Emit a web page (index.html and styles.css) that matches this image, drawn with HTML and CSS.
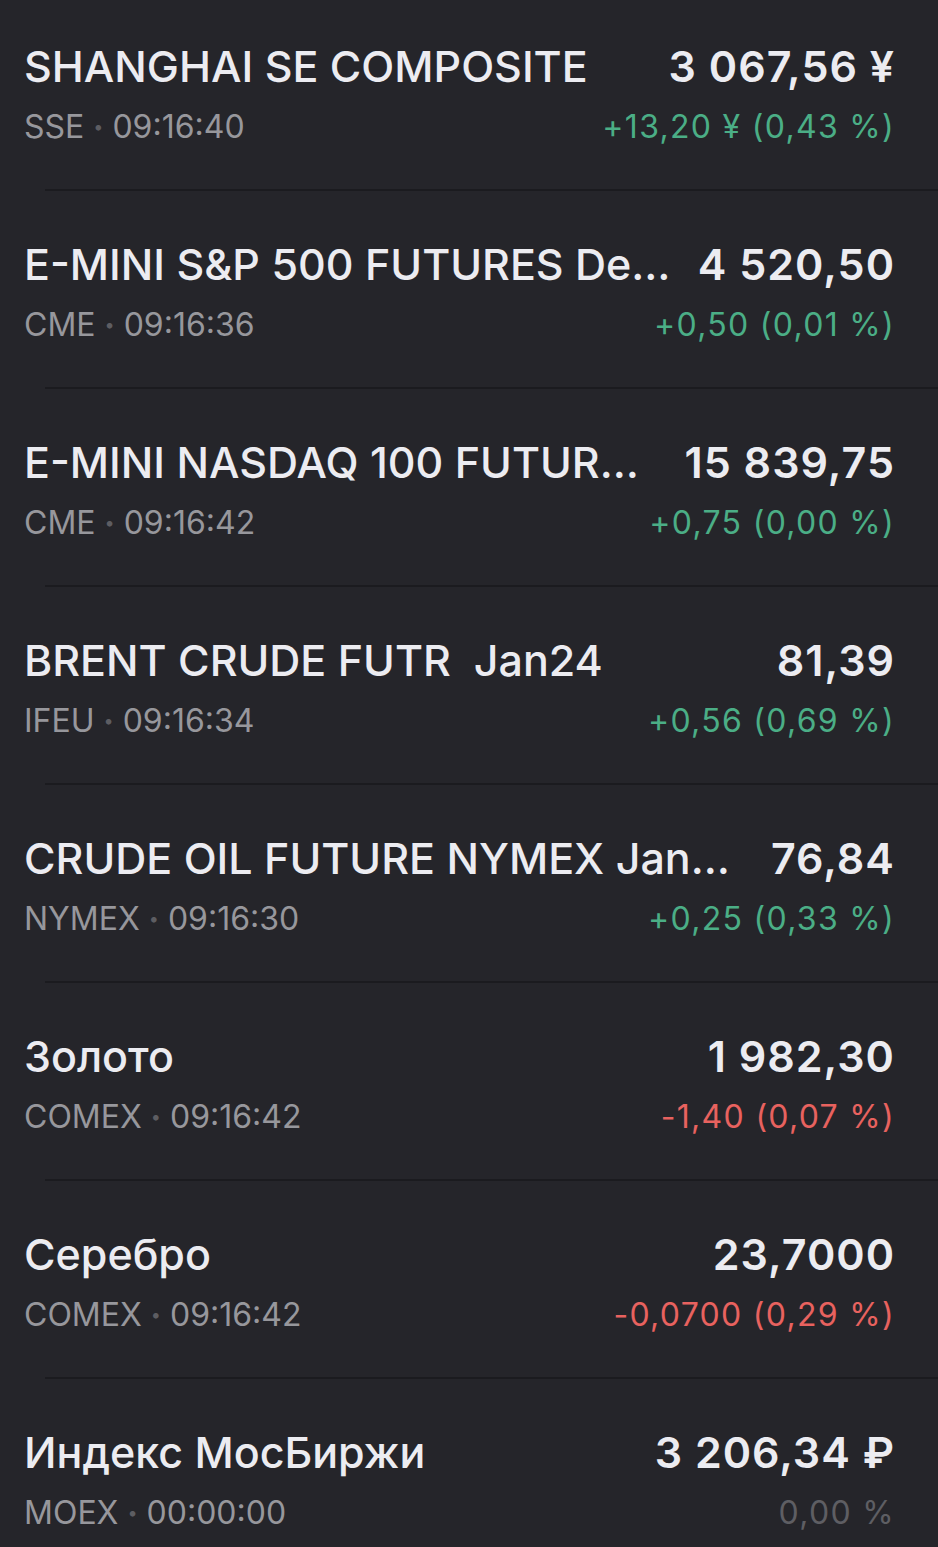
FILE: index.html
```html
<!DOCTYPE html>
<html lang="ru">
<head>
    <meta charset="UTF-8">
    <meta name="viewport" content="width=device-width, initial-scale=1.0">
    <title>Котировки</title>

    <link rel="stylesheet" href="styles.css">
</head>
<body>
    <ul class="quotes">
        <li class="quote">
            <div class="quote-main">
                <span class="quote-name">SHANGHAI SE COMPOSITE</span>
                <span class="quote-price">3&nbsp;067,56&nbsp;¥</span>
            </div>
            <div class="quote-sub">
                <span class="quote-meta">SSE <i class="dot">•</i> 09:16:40</span>
                <span class="quote-change up">+13,20&nbsp;¥ (0,43 %)</span>
            </div>
        </li>
        <li class="quote">
            <div class="quote-main">
                <span class="quote-name">E-MINI S&amp;P 500 FUTURES De…</span>
                <span class="quote-price">4&nbsp;520,50</span>
            </div>
            <div class="quote-sub">
                <span class="quote-meta">CME <i class="dot">•</i> 09:16:36</span>
                <span class="quote-change up">+0,50 (0,01 %)</span>
            </div>
        </li>
        <li class="quote">
            <div class="quote-main">
                <span class="quote-name">E-MINI NASDAQ 100 FUTUR…</span>
                <span class="quote-price">15&nbsp;839,75</span>
            </div>
            <div class="quote-sub">
                <span class="quote-meta">CME <i class="dot">•</i> 09:16:42</span>
                <span class="quote-change up">+0,75 (0,00 %)</span>
            </div>
        </li>
        <li class="quote">
            <div class="quote-main">
                <span class="quote-name">BRENT CRUDE FUTR&nbsp; Jan24</span>
                <span class="quote-price">81,39</span>
            </div>
            <div class="quote-sub">
                <span class="quote-meta">IFEU <i class="dot">•</i> 09:16:34</span>
                <span class="quote-change up">+0,56 (0,69 %)</span>
            </div>
        </li>
        <li class="quote">
            <div class="quote-main">
                <span class="quote-name">CRUDE OIL FUTURE NYMEX Jan…</span>
                <span class="quote-price">76,84</span>
            </div>
            <div class="quote-sub">
                <span class="quote-meta">NYMEX <i class="dot">•</i> 09:16:30</span>
                <span class="quote-change up">+0,25 (0,33 %)</span>
            </div>
        </li>
        <li class="quote">
            <div class="quote-main">
                <span class="quote-name">Золото</span>
                <span class="quote-price">1&nbsp;982,30</span>
            </div>
            <div class="quote-sub">
                <span class="quote-meta">COMEX <i class="dot">•</i> 09:16:42</span>
                <span class="quote-change down">-1,40 (0,07 %)</span>
            </div>
        </li>
        <li class="quote">
            <div class="quote-main">
                <span class="quote-name">Серебро</span>
                <span class="quote-price">23,7000</span>
            </div>
            <div class="quote-sub">
                <span class="quote-meta">COMEX <i class="dot">•</i> 09:16:42</span>
                <span class="quote-change down">-0,0700 (0,29 %)</span>
            </div>
        </li>
        <li class="quote">
            <div class="quote-main">
                <span class="quote-name">Индекс МосБиржи</span>
                <span class="quote-price">3&nbsp;206,34&nbsp;₽</span>
            </div>
            <div class="quote-sub">
                <span class="quote-meta">MOEX <i class="dot">•</i> 00:00:00</span>
                <span class="quote-change flat">0,00 %</span>
            </div>
        </li>
    </ul>
</body>
</html>
```

FILE: styles.css
```css
/* quotes list, dark theme */
html, body {
    margin: 0;
    padding: 0;
    background-color: #25252a;
    height: 100%;
    overflow: hidden;
}

body {
    font-family: Inter, "Noto Sans", sans-serif;
    color: #ececf1;
}

.quotes {
    list-style: none;
    margin: -7px 0 0 0;
    padding: 0;
}

.quote {
    position: relative;
    height: 198px;
    box-sizing: border-box;
    padding: 45px 43px 0 24px;
}

/* separator, inset from the left like an iOS table */
.quote::after {
    content: "";
    position: absolute;
    left: 45px;
    right: 0;
    bottom: 0;
    height: 2px;
    background: #1b1b1f;
}

.quote-main,
.quote-sub {
    display: flex;
    justify-content: space-between;
    align-items: baseline;
    gap: 24px;
}

.quote-main {
    height: 56px;
    line-height: 56px;
}

.quote-sub {
    margin-top: 11px;
    height: 44px;
    line-height: 44px;
}

.quote-name {
    font-size: 43px;
    font-weight: 500;
    white-space: nowrap;
    overflow: hidden;
    text-overflow: ellipsis;
    min-width: 0;
}

.quote-price {
    font-size: 43px;
    font-weight: 600;
    white-space: nowrap;
    letter-spacing: 1px;
}

.quote-meta {
    font-size: 32px;
    color: #97979c;
    white-space: nowrap;
}

.dot {
    font-style: normal;
    font-size: 18px;
    color: #5d5d62;
    vertical-align: 5px;
}

.quote-change {
    font-size: 32px;
    white-space: nowrap;
    letter-spacing: 1.3px;
}

.up {
    color: #4bae86;
}

.down {
    color: #e8625f;
}

.flat {
    color: #5e5e63;
}
```
